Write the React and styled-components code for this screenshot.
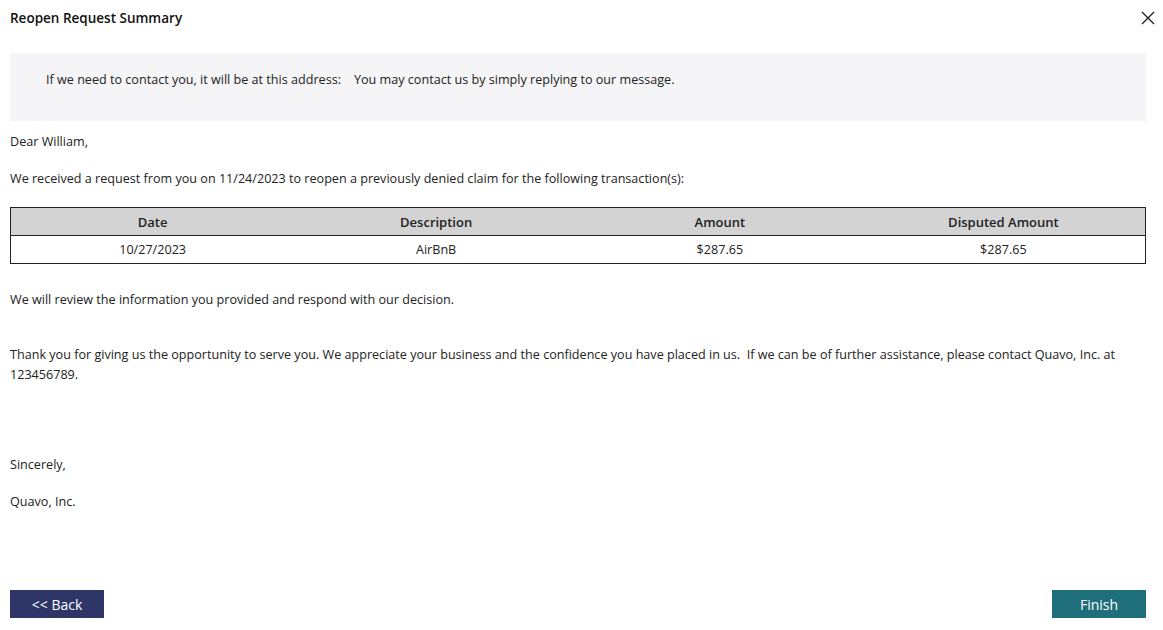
import React from 'react'
import styled, { createGlobalStyle } from 'styled-components'

const Global = createGlobalStyle`
  html, body { margin: 0; padding: 0; background: #fff; }
  body { font-family: "Open Sans", "Liberation Sans", sans-serif; color: #222; font-size: 12.6px; }
`

const Page = styled.div`
  height: 100vh;
  box-sizing: border-box;
  padding: 0 17px 12px 10px;
  display: flex;
  flex-direction: column;
`
const Header = styled.div`
  height: 36px;
  display: flex;
  align-items: center;
  justify-content: space-between;
`
const Title = styled.h1`
  margin: 0;
  font-size: 13.5px;
  font-weight: 600;
  color: #111;
`
const Close = styled.button`
  border: 0;
  background: none;
  padding: 0;
  width: 16px;
  height: 16px;
  margin-right: -10px;
  cursor: pointer;
  display: flex;
`
const Notice = styled.div`
  margin-top: 17px;
  height: 68px;
  box-sizing: border-box;
  background: #f5f5f7;
  padding: 17px 0 0 36px;
  line-height: 20px;
  display: flex;
  align-items: flex-start;
  gap: 13px;
`
const Line = styled.p`
  margin: ${p => p.$top || 0}px 0 0;
  line-height: 20px;
`
const Table = styled.table`
  margin-top: ${p => p.$top}px;
  width: 100%;
  border-collapse: collapse;
  border: 1px solid #222;
  table-layout: fixed;
`
const Th = styled.th`
  background: #d3d3d3;
  height: 27px;
  font-weight: 600;
  font-size: 13px;
  line-height: 16px;
  border-bottom: 1px solid #222;
  padding: 0;
`
const Td = styled.td`
  height: 27px;
  text-align: center;
  padding: 0;
`
const Footer = styled.div`
  margin-top: auto;
  display: flex;
  justify-content: space-between;
`
const Button = styled.button`
  border: 0;
  height: 28px;
  width: ${p => p.$w}px;
  background: ${p => p.$bg};
  color: #fff;
  font-family: "Open Sans", "Liberation Sans", sans-serif;
  font-size: 14px;
  cursor: pointer;
  padding: 0;
`

export default function App() {
  return (
    <Page>
      <Global />
      <Header>
        <Title>Reopen Request Summary</Title>
        <Close aria-label="Close">
          <svg width="16" height="16" viewBox="0 0 16 16">
            <path d="M2 2 L14 14 M14 2 L2 14" stroke="#222" strokeWidth="1.4" fill="none" />
          </svg>
        </Close>
      </Header>
      <Notice>
        <span>If we need to contact you, it will be at this address:</span>
        <span>You may contact us by simply replying to our message.</span>
      </Notice>
      <Line $top={11}>Dear William,</Line>
      <Line $top={17}>We received a request from you on 11/24/2023 to reopen a previously denied claim for the following transaction(s):</Line>
      <Table $top={18}>
        <thead>
          <tr>
            <Th>Date</Th>
            <Th>Description</Th>
            <Th>Amount</Th>
            <Th>Disputed Amount</Th>
          </tr>
        </thead>
        <tbody>
          <tr>
            <Td>10/27/2023</Td>
            <Td>AirBnB</Td>
            <Td>$287.65</Td>
            <Td>$287.65</Td>
          </tr>
        </tbody>
      </Table>
      <Line $top={26}>We will review the information you provided and respond with our decision.</Line>
      <Line $top={35}>Thank you for giving us the opportunity to serve you. We appreciate your business and the confidence you have placed in us.&nbsp; If we can be of further assistance, please contact Quavo, Inc. at 123456789.</Line>
      <Line $top={70}>Sincerely,</Line>
      <Line $top={17}>Quavo, Inc.</Line>
      <Footer>
        <Button $w={94} $bg="#2e3567">&lt;&lt; Back</Button>
        <Button $w={94} $bg="#1f6e7c">Finish</Button>
      </Footer>
    </Page>
  )
}
